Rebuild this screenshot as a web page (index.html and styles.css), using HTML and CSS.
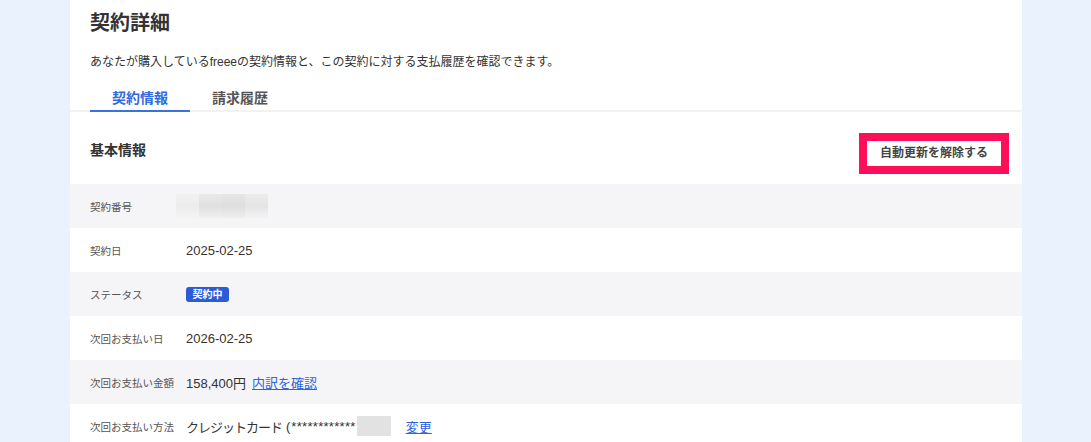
FILE: index.html
```html
<!DOCTYPE html>
<html lang="ja">
<head>
<meta charset="utf-8">
<title>契約詳細</title>
<link rel="stylesheet" href="styles.css">
</head>
<body>
<div class="page">
  <main class="card">
    <header class="card-head">
      <h1 class="title">契約詳細</h1>
      <p class="desc">あなたが購入しているfreeeの契約情報と、この契約に対する支払履歴を確認できます。</p>
    </header>
    <nav class="tabs">
      <a class="tab tab-active">契約情報</a>
      <a class="tab">請求履歴</a>
    </nav>
    <section class="section">
      <div class="section-head">
        <h2 class="section-title">基本情報</h2>
        <button class="btn">自動更新を解除する</button>
      </div>
      <div class="rows">
        <div class="row alt">
          <div class="label">契約番号</div>
          <div class="value"><span class="blur-num"><span></span><span></span><span></span><span></span></span></div>
        </div>
        <div class="row">
          <div class="label">契約日</div>
          <div class="value">2025-02-25</div>
        </div>
        <div class="row alt">
          <div class="label">ステータス</div>
          <div class="value"><span class="badge">契約中</span></div>
        </div>
        <div class="row">
          <div class="label">次回お支払い日</div>
          <div class="value">2026-02-25</div>
        </div>
        <div class="row alt">
          <div class="label">次回お支払い金額</div>
          <div class="value">158,400円<a class="link link-gap">内訳を確認</a></div>
        </div>
        <div class="row">
          <div class="label">次回お支払い方法</div>
          <div class="value"><span class="kana">クレジットカード</span><span class="paren">(</span><span class="stars">************</span><span class="blur-card"></span><a class="link link-change">変更</a></div>
        </div>
        <div class="row alt">
          <div class="label">&nbsp;</div>
          <div class="value">&nbsp;</div>
        </div>
      </div>
    </section>
  </main>
</div>
</body>
</html>
```
FILE: styles.css
```css
* { box-sizing: border-box; }
html, body { margin: 0; padding: 0; }
body {
  background: #eaf2fd;
  font-family: "Liberation Sans", "Noto Sans CJK JP", sans-serif;
  color: #333;
  overflow: hidden;
}
.page {
  padding: 0 69px 0 70px;
}
.card {
  background: #fff;
  min-height: 442px;
}
.card-head {
  padding: 9px 20px 0 20px;
}
.title {
  margin: 0;
  font-size: 20px;
  line-height: 28px;
  font-weight: 700;
  color: #333;
}
.desc {
  margin: 16px 0 0 0;
  font-size: 12px;
  line-height: 18px;
  color: #333;
}
.tabs {
  display: flex;
  margin-top: 15px;
  padding-left: 20px;
  border-bottom: 2px solid #f2f2f2;
}
.tab {
  display: block;
  padding: 2px 22px 2px 22px;
  font-size: 14px;
  line-height: 20px;
  font-weight: 700;
  color: #555;
  border-bottom: 2px solid transparent;
  margin-bottom: -2px;
}
.tab-active {
  color: #2f6ae0;
  border-bottom-color: #3a70e0;
}
.section-head {
  display: flex;
  justify-content: space-between;
  align-items: flex-start;
  height: 72px;
  padding: 0 21px 0 20px;
}
.section-title {
  margin: 28px 0 0 0;
  font-size: 14px;
  line-height: 20px;
  font-weight: 700;
  color: #333;
}
.btn {
  margin-top: 29px;
  height: 25px;
  padding: 0 13px;
  border: 0;
  background: #fff;
  outline: 8px solid #ff0f5a;
  font-family: inherit;
  font-size: 12px;
  font-weight: 700;
  color: #444;
  line-height: 25px;
}
.row {
  display: flex;
  align-items: center;
  height: 44px;
  padding-left: 20px;
  background: #fff;
}
.row.alt {
  background: #f5f4f6;
}
.label {
  width: 96px;
  flex: none;
  font-size: 10.5px;
  color: #555;
}
.value {
  display: flex;
  align-items: center;
  font-size: 13px;
  color: #333;
}
.blur-num {
  display: flex;
  width: 92px;
  height: 24px;
  margin-left: -10px;
}
.blur-num span {
  flex: 1;
}
.blur-num span:nth-child(1) { background: linear-gradient(180deg, #f1f1f1, #ececec 50%, #f4f4f4); }
.blur-num span:nth-child(2) { background: linear-gradient(180deg, #e9e9e9, #e0e0e0 50%, #efefef); }
.blur-num span:nth-child(3) { background: linear-gradient(180deg, #e6e6e6, #dedede 50%, #eeeeee); }
.blur-num span:nth-child(4) { background: linear-gradient(180deg, #ececec, #e4e4e4 50%, #f3f3f3); }
.badge {
  display: inline-block;
  width: 43px;
  height: 15px;
  line-height: 15px;
  border-radius: 3px;
  background: #2c5bd6;
  color: #fff;
  font-size: 10px;
  font-weight: 700;
  text-align: center;
}
.link {
  color: #2e64d8;
  text-decoration: underline;
}
.link-gap {
  margin-left: 6px;
}
.kana {
  letter-spacing: -1px;
}
.paren {
  margin-left: 4px;
  margin-right: 1px;
}
.stars {
  letter-spacing: 0.3px;
}
.blur-card {
  display: inline-block;
  width: 34px;
  height: 20px;
  margin-left: 1px;
  background: #e2e2e2;
}
.link-change {
  margin-left: 15px;
}
```
